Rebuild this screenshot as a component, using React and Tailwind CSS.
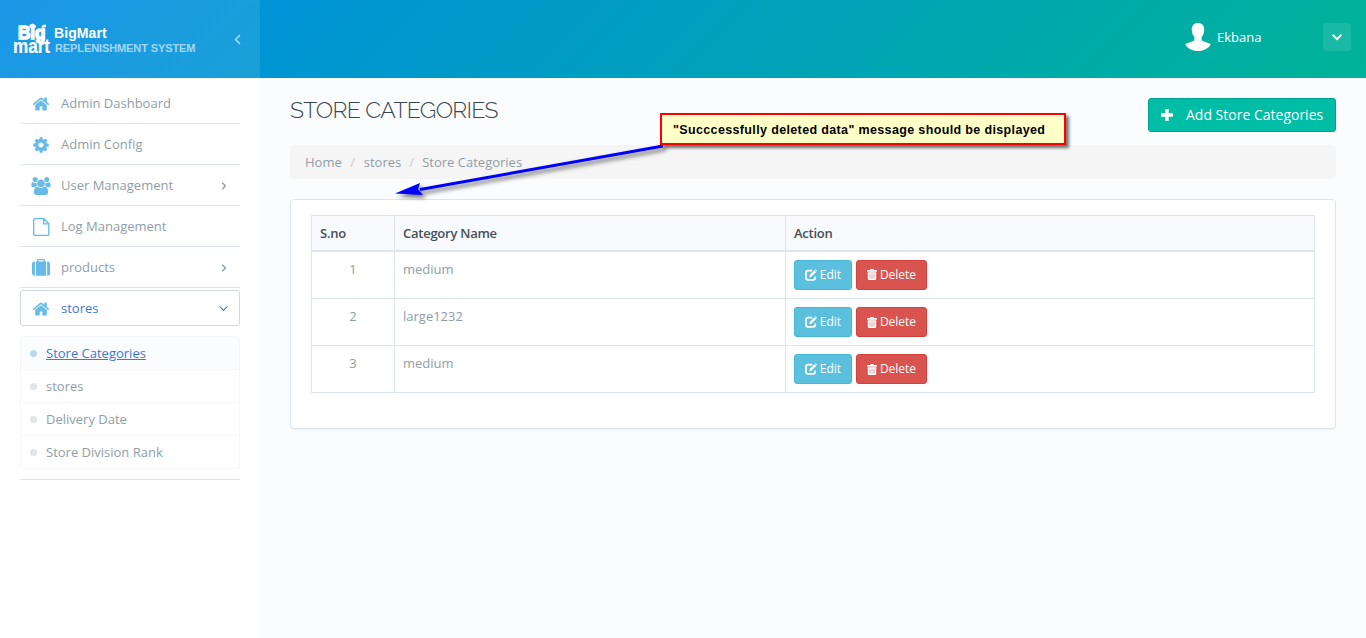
import React from "react";

const FA = {
  home: { vb: "0 0 1792 1792", d: "M1472 992v480q0 26-19 45t-45 19h-384v-384h-256v384h-384q-26 0-45-19t-19-45v-480q0-1 .5-3t.5-3l575-474 575 474q1 2 1 6zm223-69l-62 74q-8 9-21 11h-3q-13 0-21-7l-692-577-692 577q-12 8-24 7-13-2-21-11l-62-74q-8-10-7-23.5t11-21.5l719-599q32-26 76-26t76 26l244 204v-195q0-14 9-23t23-9h192q14 0 23 9t9 23v408l219 182q10 8 11 21.5t-7 23.5z" },
  cog: { vb: "0 0 1792 1792", d: "M1152 896q0-106-75-181t-181-75-181 75-75 181 75 181 181 75 181-75 75-181zm512-109v222q0 12-8 23t-20 13l-185 28q-19 54-39 91 35 50 107 138 10 12 10 25t-9 23q-27 37-99 108t-94 71q-12 0-26-9l-138-108q-44 23-91 38-16 136-29 186-7 28-36 28h-222q-14 0-24.5-8.5t-11.5-21.5l-28-184q-49-16-90-37l-141 107q-10 9-25 9-14 0-25-11-126-114-165-168-7-10-7-23 0-12 8-23 15-21 51-66.5t54-70.5q-27-50-41-99l-183-27q-13-2-21-12.5t-8-23.5v-222q0-12 8-23t19-13l186-28q14-46 39-92-40-57-107-138-10-12-10-24 0-10 9-23 26-36 98.5-107.5t94.5-71.5q13 0 26 10l138 107q44-23 91-38 16-136 29-186 7-28 36-28h222q14 0 24.5 8.5t11.5 21.5l28 184q49 16 90 37l142-107q9-9 24-9 13 0 25 10 129 119 165 170 7 8 7 22 0 12-8 23-15 21-51 66.5t-54 70.5q26 50 41 98l183 28q13 2 21 12.5t8 23.5z" },
  users: { vb: "-64 0 1920 1792", d: "M529 896q-162 5-265 128h-134q-82 0-138-40.5t-56-118.5q0-353 124-353 6 0 43.5 21t97.5 42.5 119 21.5q67 0 133-23-5 37-5 66 0 139 81 256zm1071 637q0 120-73 189.5t-194 69.5h-874q-121 0-194-69.5t-73-189.5q0-53 3.5-103.5t14-109 26.5-108.5 43-97.5 62-81 85.5-53.5 111.5-20q10 0 43 21.5t73 48 107 48 135 21.5 135-21.5 107-48 73-48 43-21.5q61 0 111.5 20t85.5 53.5 62 81 43 97.5 26.5 108.5 14 109 3.5 103.5zm-1024-1277q0 106-75 181t-181 75-181-75-75-181 75-181 181-75 181 75 75 181zm704 384q0 159-112.5 271.5t-271.5 112.5-271.5-112.5-112.5-271.5 112.5-271.5 271.5-112.5 271.5 112.5 112.5 271.5zm576 225q0 78-56 118.5t-138 40.5h-134q-103-123-265-128 81-117 81-256 0-29-5-66 66 23 133 23 59 0 119-21.5t97.5-42.5 43.5-21q124 0 124 353zm-128-609q0 106-75 181t-181 75-181-75-75-181 75-181 181-75 181 75 75 181z" },
  suitcase: { vb: "0 0 1792 1792", d: "M640 256h512v-128h-512v128zm-352 0v1408h-64q-92 0-158-66t-66-158v-960q0-92 66-158t158-66h64zm1120 0v1408h-1024v-1408h128v-160q0-40 28-68t68-28h576q40 0 68 28t28 68v160h128zm384 224v960q0 92-66 158t-158 66h-64v-1408h64q92 0 158 66t66 158z" },
};

function Icon({ name, className }) {
  return (
    <svg viewBox={FA[name].vb} className={className} fill="currentColor">
      <path d={FA[name].d} />
    </svg>
  );
}

function Chevron({ down, size = 8, width = 1.2 }) {
  return (
    <svg width={size} height={size} viewBox="0 0 8 8" fill="none" stroke="currentColor" strokeWidth={width}>
      <path d={down ? "M0.5 2.2 4 5.7 7.5 2.2" : "M2.2 0.8 5.4 4 2.2 7.2"} />
    </svg>
  );
}

const FileIcon = () => (
  <svg className="h-[18px] w-[17px]" viewBox="0 0 17 18" fill="none" stroke="currentColor" strokeWidth="1.3">
    <path d="M1.6.7h9.3l4.9 4.9v10.8q0 .9-.9.9H1.6q-.9 0-.9-.9V1.6q0-.9.9-.9zM10.7.7v5.1h5.1" />
  </svg>
);

const EditIcon = () => (
  <svg className="h-3 w-3" viewBox="0 0 12 12">
    <path d="M7.3 1.6H3Q1 1.6 1 3.6v5.2q0 2 2 2h5.2q2 0 2-2V7.4" fill="none" stroke="currentColor" strokeWidth="1.8" />
    <path d="M4.3 8.2l.6-2.4L9.4 1.3l1.8 1.8-4.5 4.5zM9.9.8l.6-.6 1.7 1.7-.6.6z" fill="currentColor" />
  </svg>
);

const TrashIcon = () => (
  <svg className="h-[11px] w-[10px]" viewBox="0 0 10 11" fill="currentColor">
    <path d="M3.200 1V.6q0-.6.6-.6h2.400q.6 0 .6.6V1h2.400q.8 0 .8.8v1H0v-1Q0 1 .8 1zM.8 3.300h8.400v6.500q0 1.200-1.200 1.200H2Q.8 11 .8 9.800z" />
    <path d="M3 4.600v5M5 4.600v5M7 4.600v5" stroke="#e58f8c" strokeWidth=".8" />
  </svg>
);

function Logo() {
  return (
    <svg className="shrink-0 overflow-visible" width="38" height="34" viewBox="0 0 38 34" fill="#fff" stroke="#fff" fontFamily="Liberation Sans, sans-serif" fontWeight="bold">
      <text x="5" y="17" fontSize="19" textLength="27.500" lengthAdjust="spacingAndGlyphs" strokeWidth="1.600">Big</text>
      <path d="M16 5.500q-.5-2.500 3.500-4 4 1.500 3.500 4zM28.500 6l1-3 3.500-.5v2.500z" stroke="none" />
      <text x="0" y="31" fontSize="20" textLength="37" lengthAdjust="spacingAndGlyphs" strokeWidth=".2">mart</text>
    </svg>
  );
}

const NAV = [
  { label: "Admin Dashboard", icon: "home" },
  { label: "Admin Config", icon: "cog" },
  { label: "User Management", icon: "users", more: true },
  { label: "Log Management", icon: "file" },
  { label: "products", icon: "suitcase", more: true },
];
const SUB = ["Store Categories", "stores", "Delivery Date", "Store Division Rank"];
const ROWS = ["medium", "large1232", "medium"];

function NavIcon({ name }) {
  return (
    <span className="flex w-5 justify-center text-[#67bbe8]">
      {name === "file" ? <FileIcon /> : <Icon name={name} className={name === "users" ? "h-[18px] w-5 shrink-0" : "h-[18px] w-[18px]"} />}
    </span>
  );
}

function Header() {
  return (
    <header className="flex h-[78px] bg-[linear-gradient(135deg,#008ce5_0%,#00b398_100%)]">
      <div className="flex w-[260px] items-center bg-white/10 pr-[17px] pl-[13px]">
        <Logo />
        <div className="ml-[3px] font-['Liberation_Sans',sans-serif] font-bold">
          <div className="mt-[2px] text-[14px] leading-[16px] tracking-[0.1px] text-white">BigMart</div>
          <div className="pl-px text-[11px] leading-[14px] tracking-[-0.1px] whitespace-nowrap text-white/60">REPLENISHMENT SYSTEM</div>
        </div>
        <div className="ml-auto rotate-180 text-white/60"><Chevron size={11} width={1.1} /></div>
      </div>
      <div className="flex flex-1 items-center pr-[15px] text-white">
        <svg className="mt-[-4px] ml-auto" width="26" height="28" viewBox="0 0 26 28" fill="#fff">
          <path d="M13 0c4 0 6.200 2.500 6.200 6.500 0 3-.8 5.500-2.600 7.600v3.200c1 1.700 8 2.200 9 4.200C23.500 25.500 18.500 28 13 28S2.500 25.500.4 21.500c1-2 8-2.500 9-4.200v-3.200C7.600 12 6.800 9.500 6.800 6.500 6.800 2.500 9 0 13 0z" />
        </svg>
        <span className="mt-[-2px] ml-[6px] w-[106px] text-[13px]">Ekbana</span>
        <span className="mt-[-4px] flex size-7 items-center justify-center rounded-[3px] bg-white/10"><Chevron down size={10} width={1.5} /></span>
      </div>
    </header>
  );
}

function Sidebar() {
  return (
    <aside className="w-[260px] shrink-0 bg-white px-5 pt-[5px] text-[13px] text-[#8f9ea6]">
      {NAV.map((n) => (
        <div key={n.label} className="flex h-[41px] items-center border-b border-[#dde6ee] pt-[2px] pr-3 pl-[11px]">
          <NavIcon name={n.icon} />
          <span className="ml-[10px]">{n.label}</span>
          {n.more && <span className="ml-auto"><Chevron width={1.4} /></span>}
        </div>
      ))}
      <div className="mt-[2px] flex h-9 items-center rounded-[3px] border border-[#cfd8dc] pt-[2px] pr-[11px] pl-[10px] text-[#3c78d8]">
        <NavIcon name="home" />
        <span className="ml-[10px]">stores</span>
        <span className="mt-[-2px] ml-auto"><Chevron down size={9} width={0.9} /></span>
      </div>
      <div className="mt-[10px] rounded-[3px] border border-[#f4f6f9]">
        {SUB.map((s, i) => (
          <div key={s} className={"flex items-center pt-[2px] pl-[9px] " + (i === 0 ? "bg-[#fbfcfe] text-[#3c78d8] underline underline-offset-1 " : "") + (i < 3 ? "h-[33px] border-b border-[#f4f6f9]" : "h-8")}>
            <span className={"mt-[-2px] mr-[9px] size-[7px] rounded-full " + (i === 0 ? "bg-[#b9d9f3]" : "bg-[#dfe5e9]")} />
            {s}
          </div>
        ))}
      </div>
      <div className="mt-[10px] border-b border-[#dde6ee]" />
    </aside>
  );
}

export default function App() {
  return (
    <div className="relative flex h-[638px] w-[1366px] flex-col overflow-hidden bg-[#fbfcfe] font-['Open_Sans',sans-serif]">
      <Header />
      <div className="flex flex-1">
        <Sidebar />
        <main className="flex-1 px-[30px] pt-5">
          <div className="flex h-[47px] items-start justify-between">
            <h1 className="mt-[-2px] font-['Raleway','Lato',sans-serif] text-[23px] leading-7 font-light tracking-[-0.68px] text-[#37474f]">STORE CATEGORIES</h1>
            <button className="flex h-[34px] w-[188px] items-center rounded-[3px] border border-[#00a591] bg-[#00bda5] pl-3 text-[14px] whitespace-nowrap text-white">
              <svg width="12" height="12" viewBox="0 0 12 12" fill="#fff"><path d="M4.300 0h3.400v4.300H12v3.400H7.700V12H4.300V7.700H0V4.300h4.300z" /></svg>
              <span className="mt-[-2px] ml-[13px]">Add Store Categories</span>
            </button>
          </div>
          <nav className="flex h-[34px] items-center rounded-[4px] bg-[#f5f5f5] px-[15px] pt-[2px] text-[13px] text-[#8f9ea6]">
            <span>Home</span><span className="w-[22px] text-center text-[#ccc]">/</span>
            <span>stores</span><span className="w-[21px] text-center text-[#ccc]">/</span>
            <span>Store Categories</span>
          </nav>
          <section className="mt-5 h-[230px] rounded-[4px] border border-[#dce6f0] bg-white px-5 pt-[15px] shadow-[0_1px_1px_rgba(0,0,0,0.05)]">
            <table className="w-full table-fixed border-collapse text-[13px] text-[#8f9ea6]">
              <colgroup><col className="w-[83px]" /><col className="w-[391px]" /><col /></colgroup>
              <thead>
                <tr className="h-[35px] bg-[#f9fafe] text-left text-[#455058]">
                  {["S.no", "Category Name", "Action"].map((h) => (
                    <th key={h} className="border border-b-2 border-[#dce6f0] px-2 pt-px font-semibold tracking-[-0.25px]">{h}</th>
                  ))}
                </tr>
              </thead>
              <tbody>
                {ROWS.map((r, i) => (
                  <tr key={i} className={"align-top " + (i === 0 ? "h-12" : "h-[47px]")}>
                    <td className="border border-[#dce6f0] px-2 pt-[7px] text-center leading-5">{i + 1}</td>
                    <td className="border border-[#dce6f0] px-2 pt-[7px] leading-5">{r}</td>
                    <td className="border border-[#dce6f0] px-2 pt-2">
                      <div className="flex gap-1 text-[12px] text-white">
                        <button className="flex h-[30px] w-[58px] items-center justify-center gap-[3px] rounded-[3px] border border-[#46b8da] bg-[#5bc0de]"><EditIcon />Edit</button>
                        <button className="flex h-[30px] w-[71px] items-center justify-center gap-[3px] rounded-[3px] border border-[#d43f3a] bg-[#d9534f]"><TrashIcon />Delete</button>
                      </div>
                    </td>
                  </tr>
                ))}
              </tbody>
            </table>
          </section>
        </main>
      </div>
      <svg className="absolute top-[130px] left-[385px] overflow-visible drop-shadow-[3px_3px_2px_rgba(0,0,0,0.55)]" width="290" height="80" viewBox="385 130 290 80">
        <path d="M663 146 420 189.500" stroke="#00f" strokeWidth="3" />
        <path d="M395 193.500 420 183 418 189.500 423 195z" fill="#00f" />
      </svg>
      <div className="absolute top-[113px] left-[660px] flex h-8 w-[406px] items-center border-2 border-[#f00] bg-[#ffffc8] pl-[11px] shadow-[3px_3px_3px_rgba(0,0,0,0.55)]">
        <svg width="374" height="20"><text x="0" y="15" fontFamily="Liberation Sans, sans-serif" fontWeight="bold" fontSize="12.500" textLength="372">"Succcessfully deleted data" message should be displayed</text></svg>
      </div>
    </div>
  );
}
